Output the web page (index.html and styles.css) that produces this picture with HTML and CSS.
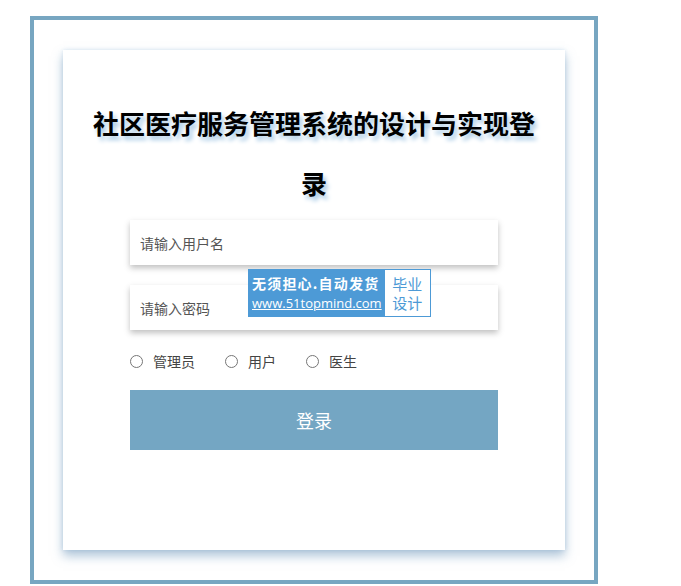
FILE: index.html
```html
<!DOCTYPE html>
<html lang="zh">
<head>
  <meta charset="UTF-8" />
  <title>登录</title>
  <link rel="stylesheet" href="styles.css">
</head>
<body>
  <div class="frame">
    <div class="card">
      <h1 class="title">社区医疗服务管理系统的设计与实现登录</h1>
      <form class="login-form">
        <input type="text" class="field" placeholder="请输入用户名">
        <input type="password" class="field" placeholder="请输入密码">
        <div class="roles">
          <label><input type="radio" name="role">管理员</label>
          <label><input type="radio" name="role">用户</label>
          <label><input type="radio" name="role">医生</label>
        </div>
        <button type="button" class="btn">登录</button>
      </form>
      <!-- watermark badge -->
      <div class="badge">
        <div class="badge-main">
          <span class="badge-top">无须担心.自动发货</span>
          <span class="badge-url">www.51topmind.com</span>
        </div>
        <div class="badge-side">
          <span>毕业</span>
          <span>设计</span>
        </div>
      </div>
    </div>
  </div>
</body>
</html>
```

FILE: styles.css
```css
body {
  margin: 0;
  background: #fff;
  font-family: "Noto Sans CJK SC", "Noto Sans", sans-serif;
  color: #333;
}
.frame {
  width: 502px;
  margin: 16px 0 0 30px;
  padding: 30px 29px;
  border: 4px solid #77a6c1;
}
.card {
  position: relative;
  width: 502px;
  padding: 43px 0 100px;
  background: #fff;
  box-shadow: 0 6px 10px rgba(110, 150, 185, 0.55), 0 0 4px rgba(150, 190, 220, 0.35);
}
.title {
  margin: 0 auto;
  width: 460px;
  font-size: 26px;
  line-height: 60px;
  font-weight: 700;
  text-align: center;
  color: #000;
  text-shadow: 3px 4px 4px #a9cbe6;
}
.login-form {
  width: 368px;
  margin: 7px auto 0;
  display: flex;
  flex-direction: column;
}
.field {
  height: 45px;
  padding: 0 10px;
  margin-bottom: 20px;
  border: none;
  outline: none;
  font-family: inherit;
  font-size: 14px;
  box-shadow: 0 3px 6px rgba(0, 0, 0, 0.25);
  box-sizing: border-box;
}
.field::placeholder { color: #555; }
.field + .field { margin-bottom: 0; }
.roles {
  display: flex;
  gap: 30px;
  margin-top: 22px;
  height: 18px;
  align-items: center;
  font-size: 14px;
  color: #444;
}
.roles label { display: flex; align-items: center; }
.roles input {
  margin: 0 10px 0 0;
  width: 13px; height: 13px;
}
.btn {
  margin-top: 20px;
  height: 60px;
  border: none;
  background: #74a6c3;
  color: #fff;
  font-family: inherit;
  font-size: 18px;
  cursor: pointer;
}
.badge {
  position: absolute;
  left: 185px; top: 219px;
  display: flex;
  height: 46px;
  background: #4d9ad6;
  border: 1px solid #4d9ad6;
}
.badge-main {
  display: flex;
  flex-direction: column;
  justify-content: center;
  padding: 0 3px;
  color: #fff;
  line-height: 20px;
}
.badge-top { font-size: 14px; font-weight: 700; letter-spacing: 1.2px; }
.badge-url { font-size: 13px; text-decoration: underline; font-family: "Open Sans", sans-serif; }
.badge-side {
  width: 45px;
  display: flex;
  flex-direction: column;
  justify-content: center;
  align-items: center;
  background: #fff;
  color: #4d9ad6;
  font-size: 15px;
  line-height: 19px;
}
```
